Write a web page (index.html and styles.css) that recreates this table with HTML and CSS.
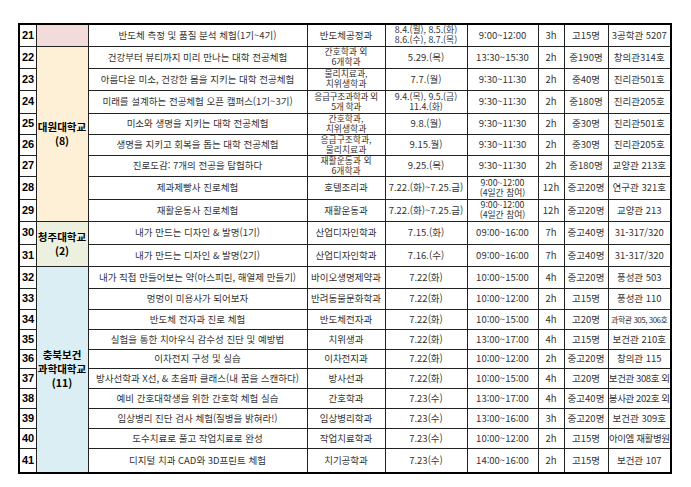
FILE: index.html
```html
<!DOCTYPE html>
<html lang="ko">
<head>
<meta charset="utf-8">
<title>전공체험 프로그램</title>
<link rel="stylesheet" href="styles.css">
</head>
<body>
<table class="t">
<colgroup>
<col class="c1"><col class="c2"><col class="c3"><col class="c4"><col class="c5"><col class="c6"><col class="c7"><col class="c8"><col class="c9">
</colgroup>
<tbody>
<tr class="h22"><td class="n">21</td><td class="u pink"></td><td>반도체 측정 및 품질 분석 체험(1기~4기)</td><td>반도체공정과</td><td class="two">8.4.(월), 8.5.(화)<br>8.6.(수), 8.7.(목)</td><td>9:00~12:00</td><td>3h</td><td>고15명</td><td>3공학관 5207</td></tr>
<tr class="h22"><td class="n">22</td><td class="u cream" rowspan="8">대원대학교<br>(8)</td><td>건강부터 뷰티까지 미리 만나는 대학 전공체험</td><td class="two">간호학과 외<br>6개학과</td><td>5.29.(목)</td><td>13:30~15:30</td><td>2h</td><td>중190명</td><td>창의관314호</td></tr>
<tr class="h22"><td class="n">23</td><td>아름다운 미소, 건강한 몸을 지키는 대학 전공체험</td><td class="two">물리치료과,<br>치위생학과</td><td>7.7.(월)</td><td>9:30~11:30</td><td>2h</td><td>중40명</td><td>진리관501호</td></tr>
<tr class="h23"><td class="n">24</td><td>미래를 설계하는 전공체험 오픈 캠퍼스(1기~3기)</td><td class="two tight">응급구조과학과 외<br>5개 학과</td><td class="two">9.4.(목), 9.5.(금)<br>11.4.(화)</td><td>9:30~11:30</td><td>2h</td><td>중180명</td><td>진리관205호</td></tr>
<tr class="h20"><td class="n">25</td><td>미소와 생명을 지키는 대학 전공체험</td><td class="two">간호학과,<br>치위생학과</td><td>9.8.(월)</td><td>9:30~11:30</td><td>2h</td><td>중30명</td><td>진리관501호</td></tr>
<tr class="h20"><td class="n">26</td><td>생명을 지키고 회복을 돕는 대학 전공체험</td><td class="two">응급구조학과,<br>물리치료과</td><td>9.15.월)</td><td>9:30~11:30</td><td>2h</td><td>중30명</td><td>진리관205호</td></tr>
<tr class="h20"><td class="n">27</td><td>진로도감: 7개의 전공을 탐험하다</td><td class="two">재활운동과 외<br>6개학과</td><td>9.25.(목)</td><td>9:30~11:30</td><td>2h</td><td>중180명</td><td>교양관 213호</td></tr>
<tr class="h23"><td class="n">28</td><td>제과제빵사 진로체험</td><td>호텔조리과</td><td>7.22.(화)~7.25.금)</td><td class="two">9:00~12:00<br>(4일간 참여)</td><td>12h</td><td>중고20명</td><td>연구관 321호</td></tr>
<tr class="h22"><td class="n">29</td><td>재활운동사 진로체험</td><td>재활운동과</td><td>7.22.(화)~7.25.금)</td><td class="two">9:00~12:00<br>(4일간 참여)</td><td>12h</td><td>중고20명</td><td>교양관 213</td></tr>
<tr class="h23"><td class="n">30</td><td class="u green" rowspan="2">청주대학교<br>(2)</td><td>내가 만드는 디자인 &amp; 발명(1기)</td><td>산업디자인학과</td><td>7.15.(화)</td><td>09:00~16:00</td><td>7h</td><td>중고40명</td><td>31-317/320</td></tr>
<tr class="h22"><td class="n">31</td><td>내가 만드는 디자인 &amp; 발명(2기)</td><td>산업디자인학과</td><td>7.16.(수)</td><td>09:00~16:00</td><td>7h</td><td>중고40명</td><td>31-317/320</td></tr>
<tr class="h22"><td class="n">32</td><td class="u blue" rowspan="10">충북보건<br>과학대학교<br>(11)</td><td>내가 직접 만들어보는 약(아스피린, 해열제 만들기)</td><td>바이오생명제약과</td><td>7.22(화)</td><td>10:00~15:00</td><td>4h</td><td>중고20명</td><td>풍성관 503</td></tr>
<tr class="h21"><td class="n">33</td><td>멍멍이 미용사가 되어보자</td><td>반려동물문화학과</td><td>7.22(화)</td><td>10:00~12:00</td><td>2h</td><td>고15명</td><td>풍성관 110</td></tr>
<tr class="h20"><td class="n">34</td><td>반도체 전자과 진로 체험</td><td>반도체전자과</td><td>7.22(화)</td><td>10:00~15:00</td><td>4h</td><td>고20명</td><td class="cond">과학관 305, 306호</td></tr>
<tr class="h20"><td class="n">35</td><td>실험을 통한 치아우식 감수성 진단 및 예방법</td><td>치위생과</td><td>7.22(화)</td><td>13:00~17:00</td><td>4h</td><td>고15명</td><td>보건관 210호</td></tr>
<tr class="h19"><td class="n">36</td><td>이차전지 구성 및 실습</td><td>이차전지과</td><td>7.22(화)</td><td>10:00~12:00</td><td>2h</td><td>중고20명</td><td>창의관 115</td></tr>
<tr class="h20"><td class="n">37</td><td>방사선학과 X선, &amp; 초음파 클래스(내 꿈을 스캔하다)</td><td>방사선과</td><td>7.22(화)</td><td>10:00~15:00</td><td>4h</td><td>고20명</td><td class="tight">보건관 308호 외</td></tr>
<tr class="h20"><td class="n">38</td><td>예비 간호대학생을 위한 간호학 체험 실습</td><td>간호학과</td><td>7.23(수)</td><td>13:00~17:00</td><td>4h</td><td>중고40명</td><td class="tight">봉사관 202호 외</td></tr>
<tr class="h20"><td class="n">39</td><td>임상병리 진단 검사 체험(질병을 밝혀라!)</td><td>임상병리학과</td><td>7.23(수)</td><td>13:00~16:00</td><td>3h</td><td>중고20명</td><td>보건관 309호</td></tr>
<tr class="h20"><td class="n">40</td><td>도수치료로 풀고 작업치료로 완성</td><td>작업치료학과</td><td>7.23(수)</td><td>10:00~12:00</td><td>2h</td><td>고15명</td><td class="tight">아이엠 재활병원</td></tr>
<tr class="h25"><td class="n">41</td><td>디지털 치과 CAD와 3D프린트 체험</td><td>치기공학과</td><td>7.23(수)</td><td>14:00~16:00</td><td>2h</td><td>고15명</td><td>보건관 107</td></tr>
</tbody>
</table>
</body>
</html>
```
FILE: styles.css
```css
html, body {
  margin: 0;
  padding: 0;
  background: #fff;
}
body {
  padding: 23px 0 0 18px;
}
.t {
  border-collapse: collapse;
  table-layout: fixed;
  width: 652px;
  border: 2px solid #000;
  font-family: "Noto Sans CJK KR", "Noto Sans", sans-serif;
  font-size: 9.5px;
  color: #333;
}
.c1 { width: 17px; }
.c2 { width: 52px; }
.c3 { width: 219px; }
.c4 { width: 78px; }
.c5 { width: 82px; }
.c6 { width: 71px; }
.c7 { width: 26px; }
.c8 { width: 44px; }
.c9 { width: 63px; }
.t td {
  border: 1px solid #222;
  padding: 0;
  text-align: center;
  vertical-align: middle;
  line-height: 11px;
  white-space: nowrap;
  overflow: hidden;
}
.t td.two {
  font-size: 8.8px;
  line-height: 10px;
  overflow: visible;
}
.t td.n {
  text-align: left;
  padding-left: 2px;
  font-family: "Liberation Sans", Arial, sans-serif;
  font-weight: bold;
  font-size: 11px;
  color: #000;
}
.t td.u {
  font-weight: bold;
  font-size: 10.5px;
  line-height: 14px;
  color: #000;
}
.pink { background: #f2dcdb; }
.cream { background: #fdf0d6; }
.green { background: #ebf1de; }
.blue { background: #daeef3; }
.t td.tight { letter-spacing: -0.4px; }
.t td.cond { font-size: 8px; letter-spacing: -0.5px; }
.h19 { height: 19px; }
.h20 { height: 20px; }
.h21 { height: 21px; }
.h22 { height: 22px; }
.h23 { height: 23px; }
.h25 { height: 25px; }
```
